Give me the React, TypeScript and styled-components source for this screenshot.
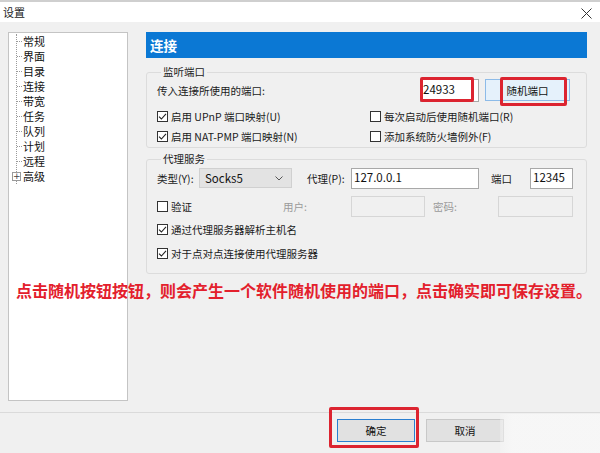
import styled, { createGlobalStyle } from 'styled-components'

const GlobalStyle = createGlobalStyle`
  html, body { margin: 0; padding: 0; background: #f0f0f0; }
  * { box-sizing: border-box; }
`

const UI_FONT = `"Noto Sans CJK SC", "Noto Sans", sans-serif`

const treeItems = ['常规', '界面', '目录', '连接', '带宽', '任务', '队列', '计划', '远程']

const Check = ({ checked }: { checked?: boolean }) => (
  <CheckBox>
    {checked && (
      <svg width="9" height="9" viewBox="0 0 9 9">
        <path d="M1 4.6 L3.4 7 L8 1.8" fill="none" stroke="#222" strokeWidth="1.1" />
      </svg>
    )}
  </CheckBox>
)

export default function App() {
  return (
    <Window>
      <GlobalStyle />
      <TitleBar>
        <Title>设置</Title>
        <Close>
          <svg width="11" height="11" viewBox="0 0 11 11">
            <path d="M0.5 0.5 L10.5 10.5 M10.5 0.5 L0.5 10.5" stroke="#333" strokeWidth="1" />
          </svg>
        </Close>
      </TitleBar>

      <Body>
        <Tree>
          <TreeList>
            {treeItems.map((item) => (
              <TreeItem key={item}>
                <Connector />
                {item}
              </TreeItem>
            ))}
            <TreeItem>
              <Expander>+</Expander>
              高级
            </TreeItem>
          </TreeList>
        </Tree>

        <Pane>
          <PaneHeader>连接</PaneHeader>

          <Group>
            <Legend>监听端口</Legend>
            <PortRow>
              <RowLabel>传入连接所使用的端口:</RowLabel>
              <TextInput $width={59} $height={23} value="24933" readOnly />
              <RandomButton>随机端口</RandomButton>
            </PortRow>
            <CheckGrid>
              <CheckLine><Check checked />启用 UPnP 端口映射(U)</CheckLine>
              <CheckLine><Check />每次启动后使用随机端口(R)</CheckLine>
              <CheckLine><Check checked />启用 NAT-PMP 端口映射(N)</CheckLine>
              <CheckLine><Check />添加系统防火墙例外(F)</CheckLine>
            </CheckGrid>
          </Group>

          <Group $second>
            <Legend>代理服务</Legend>
            <ProxyRow>
              <FieldLabel $width={42}>类型(Y):</FieldLabel>
              <Select>
                Socks5
                <svg width="8" height="5" viewBox="0 0 8 5">
                  <path d="M0.5 0.5 L4 4 L7.5 0.5" fill="none" stroke="#555" strokeWidth="1" />
                </svg>
              </Select>
              <FieldLabel $width={44} $gap={15}>代理(P):</FieldLabel>
              <TextInput $width={128} $height={21} value="127.0.0.1" readOnly />
              <FieldLabel $width={39} $gap={12}>端口</FieldLabel>
              <TextInput $width={43} $height={21} value="12345" readOnly />
            </ProxyRow>
            <AuthRow>
              <CheckLine $width={126}><Check />验证</CheckLine>
              <FieldLabel $width={68} $muted>用户:</FieldLabel>
              <DisabledInput $width={74} />
              <FieldLabel $width={65} $gap={8} $muted>密码:</FieldLabel>
              <DisabledInput $width={75} />
            </AuthRow>
            <CheckStack>
              <CheckLine><Check checked />通过代理服务器解析主机名</CheckLine>
              <CheckLine><Check checked />对于点对点连接使用代理服务器</CheckLine>
            </CheckStack>
          </Group>
        </Pane>
      </Body>

      <Footer>
        <DialogButton $primary>确定</DialogButton>
        <DialogButton>取消</DialogButton>
      </Footer>

      <Note>点击随机按钮按钮，则会产生一个软件随机使用的端口，点击确实即可保存设置。</Note>
      <Mark $x={420} $y={77} $w={54} $h={25} />
      <Mark $x={500} $y={77} $w={67} $h={29} />
      <Mark $x={329} $y={407} $w={90} $h={41} />
      <Watermark />
    </Window>
  )
}

const Window = styled.div`
  position: relative;
  width: 600px;
  height: 453px;
  overflow: hidden;
  background: #f0f0f0;
  font-family: ${UI_FONT};
  font-size: 10.5px;
  color: #1a1a1a;
  display: flex;
  flex-direction: column;
`

const TitleBar = styled.div`
  height: 22px;
  flex: none;
  background: #ffffff;
  border-top: 2px solid #cfcfcf;
  display: flex;
  align-items: center;
  justify-content: space-between;
  padding: 0 8px 0 3px;
`

const Title = styled.span`
  font-size: 11px;
  line-height: 14px;
  color: #222;
`

const Close = styled.span`
  display: flex;
  margin-top: 2px;
`

const Body = styled.div`
  height: 390px;
  flex: none;
  display: flex;
  align-items: flex-start;
  padding: 10px 0 0 8px;
`

const Tree = styled.div`
  width: 120px;
  height: 369px;
  flex: none;
  background: #ffffff;
  border: 1px solid #c4c4c4;
  padding: 1px 0 0 7px;
`

const TreeList = styled.div`
  border-left: 1px dotted #9a9a9a;
  display: flex;
  flex-direction: column;
`

const TreeItem = styled.div`
  height: 15px;
  display: flex;
  align-items: center;
  font-size: 11px;
  line-height: 15px;
  color: #111;
`

const Connector = styled.span`
  width: 5px;
  margin-right: 1px;
  border-top: 1px dotted #9a9a9a;
`

const Expander = styled.span`
  width: 9px;
  height: 9px;
  margin: 0 2px 0 -5px;
  border: 1px solid #9a9a9a;
  background: #fff;
  font-size: 9px;
  line-height: 7px;
  text-align: center;
  color: #444;
  font-family: "DejaVu Sans", sans-serif;
`

const Pane = styled.div`
  width: 441px;
  margin-left: 18px;
  display: flex;
  flex-direction: column;
`

const PaneHeader = styled.div`
  height: 26px;
  background: #0b78d4;
  color: #ffffff;
  font-size: 13.5px;
  font-weight: 700;
  line-height: 26px;
  padding-left: 4px;
`

const Group = styled.fieldset<{ $second?: boolean }>`
  margin: ${(p) => (p.$second ? '4px' : '7px')} 0 0;
  padding: 0 16px ${(p) => (p.$second ? '9px' : '1px')} 10px;
  border: 1px solid #dcdcdc;
  border-radius: 3px;
  min-width: 0;
`

const Legend = styled.legend`
  margin-left: 4px;
  padding: 0 2px;
  font-size: 10.5px;
  line-height: 14px;
  color: #222;
`

const PortRow = styled.div`
  height: 24px;
  display: flex;
  align-items: center;
  margin-top: -1px;
`

const RowLabel = styled.span`
  flex: 1;
`

const TextInput = styled.input<{ $width: number; $height: number }>`
  width: ${(p) => p.$width}px;
  height: ${(p) => p.$height}px;
  flex: none;
  border: 1px solid #a8a8a8;
  background: #ffffff;
  padding: 0 0 2px 2px;
  font-family: ${UI_FONT};
  font-size: 11.5px;
  color: #111;
  outline: none;
`

const DisabledInput = styled.div<{ $width: number }>`
  width: ${(p) => p.$width}px;
  height: 21px;
  flex: none;
  border: 1px solid #d6d6d6;
  background: #f0f0f0;
`

const RandomButton = styled.button`
  width: 85px;
  height: 22px;
  margin-left: 6px;
  flex: none;
  border: 1px solid #8dbbe8;
  background: #e5f1fb;
  font-family: ${UI_FONT};
  font-size: 10.5px;
  color: #111;
  padding: 0;
`

const CheckGrid = styled.div`
  display: grid;
  grid-template-columns: 213px 1fr;
  grid-auto-rows: 20px;
  margin-top: 4px;
`

const CheckLine = styled.div<{ $width?: number }>`
  display: flex;
  align-items: center;
  gap: 3px;
  white-space: nowrap;
  ${(p) => (p.$width ? `width: ${p.$width}px; flex: none;` : '')}
`

const CheckBox = styled.span`
  width: 11px;
  height: 11px;
  flex: none;
  border: 1px solid #333;
  background: #ffffff;
  display: flex;
  align-items: center;
  justify-content: center;
`

const ProxyRow = styled.div`
  height: 22px;
  display: flex;
  align-items: center;
  margin-top: 1px;
`

const FieldLabel = styled.span<{ $width: number; $gap?: number; $muted?: boolean }>`
  width: ${(p) => p.$width}px;
  margin-left: ${(p) => p.$gap ?? 0}px;
  flex: none;
  white-space: nowrap;
  color: ${(p) => (p.$muted ? '#9a9a9a' : '#1a1a1a')};
`

const Select = styled.div`
  width: 93px;
  height: 20px;
  flex: none;
  background: #e3e3e3;
  border: 1px solid #d0d0d0;
  display: flex;
  align-items: center;
  justify-content: space-between;
  padding: 0 8px 0 5px;
  font-size: 11.5px;
  color: #111;
`

const AuthRow = styled.div`
  height: 21px;
  display: flex;
  align-items: center;
  margin-top: 7px;
`

const CheckStack = styled.div`
  display: flex;
  flex-direction: column;
  gap: 2px;
  margin-top: 1px;

  & > div {
    height: 22px;
  }
`

const Footer = styled.div`
  flex: 1;
  border-top: 1px solid #dadada;
  display: flex;
  gap: 11px;
  padding: 6px 0 0 337px;
`

const DialogButton = styled.button<{ $primary?: boolean }>`
  width: 78px;
  height: 23px;
  border: 1px solid ${(p) => (p.$primary ? '#2a7fd0' : '#c8c8c8')};
  background: #e1e1e1;
  font-family: ${UI_FONT};
  font-size: 10.5px;
  color: #111;
  padding: 0;
`

const Note = styled.div`
  position: absolute;
  left: 16px;
  top: 280px;
  font-family: "Noto Sans CJK SC", sans-serif;
  font-size: 16px;
  font-weight: 700;
  line-height: 20px;
  color: #e3202c;
  white-space: nowrap;
`

const Mark = styled.div<{ $x: number; $y: number; $w: number; $h: number }>`
  position: absolute;
  left: ${(p) => p.$x}px;
  top: ${(p) => p.$y}px;
  width: ${(p) => p.$w}px;
  height: ${(p) => p.$h}px;
  border: 3px solid #dc2430;
  border-radius: 2px;
`

const Watermark = styled.div`
  position: absolute;
  left: 500px;
  top: 414px;
  width: 100px;
  height: 39px;
  background: linear-gradient(90deg, rgba(247, 247, 247, 0.3), rgba(247, 247, 247, 0.95) 12%);
`
